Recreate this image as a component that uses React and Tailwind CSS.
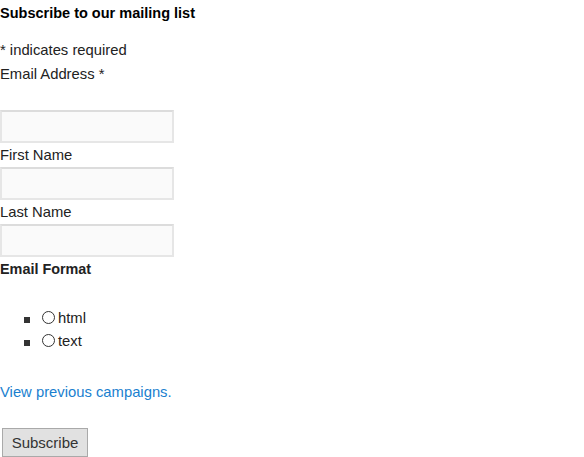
export default function App() {
  const Radio = () => (
    <span className="inline-block w-[13px] h-[13px] rounded-full border border-[#333] mr-[3px] ml-[2px] -translate-y-[1px]"></span>
  );
  return (
    <div className="w-[584px] h-[457px] bg-white text-[#222] text-[14.8px] leading-[24px]" style={{ fontFamily: '"Liberation Sans", Arial, sans-serif' }}>
      <form>
        <h2 className="text-[14.5px] font-bold text-black leading-[26px] pt-0">Subscribe to our mailing list</h2>
        <div className="mt-[12px]">* indicates required</div>
        <div>Email Address *</div>
        <div className="h-[24px]"></div>
        <div className="w-[174px] h-[33px] border-2 border-[#e6e6e6] border-t-[#dcdcdc] bg-[#fafafa]"></div>
        <div>First Name</div>
        <div className="w-[174px] h-[33px] border-2 border-[#e6e6e6] border-t-[#dcdcdc] bg-[#fafafa]"></div>
        <div>Last Name</div>
        <div className="w-[174px] h-[33px] border-2 border-[#e6e6e6] border-t-[#dcdcdc] bg-[#fafafa]"></div>
        <div className="font-bold text-[14.4px]">Email Format</div>
        <ul className="mt-[26px]">
          <li className="flex items-center leading-[23px]">
            <span className="inline-block w-[6px] h-[6px] bg-[#333] ml-[24px] mr-[10px] translate-y-[1px]"></span>
            <Radio />
            html
          </li>
          <li className="flex items-center leading-[23px]">
            <span className="inline-block w-[6px] h-[6px] bg-[#333] ml-[24px] mr-[10px] translate-y-[1px]"></span>
            <Radio />
            text
          </li>
        </ul>
        <div className="mt-[27px]"><a className="text-[#1a7fcf]">View previous campaigns.</a></div>
        <button type="button" className="mt-[24px] ml-[2px] w-[86px] h-[29px] border border-[#a9a9a9] bg-[#e1e1e1] text-[#333] text-[15px] leading-[27px]">Subscribe</button>
      </form>
    </div>
  );
}
